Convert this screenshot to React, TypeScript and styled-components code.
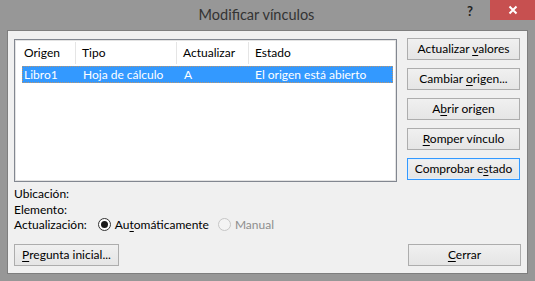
import React from 'react';
import styled, { createGlobalStyle } from 'styled-components';

const GlobalStyle = createGlobalStyle`
  html, body {
    margin: 0;
    padding: 0;
    background: #979797;
  }
  body {
    font-family: Lato, 'Noto Sans', 'Liberation Sans', sans-serif;
    font-size: 12px;
    color: #000;
  }
`;

const Window = styled.div`
  width: 535px;
  height: 281px;
  box-sizing: border-box;
  background: #979797;
  display: flex;
  flex-direction: column;
  padding: 0 7px 7px 7px;
`;

const TitleBar = styled.div`
  height: 30px;
  display: flex;
  align-items: flex-start;
`;

const Title = styled.div`
  flex: 1;
  text-align: center;
  font-size: 14.5px;
  line-height: 30px;
  color: #333;
  padding-left: 44px;
`;

const HelpButton = styled.div`
  width: 16px;
  height: 20px;
  line-height: 22px;
  text-align: center;
  font-weight: bold;
  font-size: 13px;
  color: #222;
  margin-right: 12px;
`;

const CloseButton = styled.div`
  width: 45px;
  height: 20px;
  background: #c75050;
  display: flex;
  align-items: center;
  justify-content: center;
  margin-right: -7px;
`;

const Client = styled.div`
  flex: 1;
  background: #f0f0f0;
  border: 1px solid #7e7e7e;
  display: flex;
  flex-direction: column;
  padding: 7px 6px 0 6px;
`;

const TopSection = styled.div`
  display: flex;
  gap: 10px;
`;

const ListView = styled.div`
  width: 383px;
  height: 143px;
  box-sizing: border-box;
  margin-top: 1px;
  border: 1px solid #828790;
  box-shadow: inset 0 0 0 1px #e3e3e3;
  background: #fff;
  padding: 2px 2px;
`;

const HeaderRow = styled.div`
  display: grid;
  grid-template-columns: 59px 101px 72px 1fr;
  height: 22px;
  align-items: center;
`;

const HeaderCell = styled.div<{ $first?: boolean }>`
  height: 22px;
  line-height: 22px;
  padding-left: ${p => (p.$first ? '7px' : '6px')};
  border-right: 1px solid #e5e5e5;
  &:last-child {
    border-right: none;
  }
`;

const DataRow = styled.div<{ $selected?: boolean }>`
  display: grid;
  grid-template-columns: 60px 101px 71px 1fr;
  height: 17px;
  line-height: 15px;
  box-sizing: border-box;
  margin: 2px 1px 0 5px;
  background: ${p => (p.$selected ? '#3399ff' : 'transparent')};
  color: ${p => (p.$selected ? '#fff' : '#000')};
  border: 1px dotted ${p => (p.$selected ? '#b99570' : 'transparent')};
`;

const DataCell = styled.div<{ $first?: boolean }>`
  padding-left: ${p => (p.$first ? '1px' : '0')};
  white-space: nowrap;
`;

const ButtonColumn = styled.div`
  display: flex;
  flex-direction: column;
  gap: 8px;
`;

const Button = styled.button<{ $default?: boolean; $width?: number }>`
  width: ${p => p.$width ?? 113}px;
  height: 22px;
  box-sizing: border-box;
  border: 1px solid ${p => (p.$default ? '#3399ff' : '#adadad')};
  box-shadow: ${p => (p.$default ? 'inset 0 0 0 1px #e0eefb' : 'none')};
  background: linear-gradient(#f0f0f0, #e5e5e5);
  font-family: Lato, 'Noto Sans', 'Liberation Sans', sans-serif;
  font-size: 12px;
  color: #000;
  padding: 0;
  line-height: 18px;
  text-align: center;
  cursor: default;
  u {
    text-decoration: underline;
    text-underline-offset: 2px;
  }
`;

const InfoSection = styled.div`
  display: flex;
  flex-direction: column;
  margin-top: 4px;
`;

const InfoLine = styled.div`
  height: 15.5px;
  line-height: 15px;
  display: flex;
  align-items: center;
`;

const UpdateLabel = styled.span`
  margin-right: 11px;
`;

const RadioLabel = styled.label<{ $disabled?: boolean }>`
  display: flex;
  align-items: center;
  gap: 4px;
  color: ${p => (p.$disabled ? '#8d8d8d' : '#000')};
  margin-right: 9px;
  u {
    text-underline-offset: 2px;
  }
`;

const RadioCircle = styled.span<{ $checked?: boolean; $disabled?: boolean }>`
  width: 13px;
  height: 13px;
  box-sizing: border-box;
  border-radius: 50%;
  border: 1px solid ${p => (p.$disabled ? '#c6c6c6' : '#333')};
  background: ${p => (p.$disabled ? '#f4f4f4' : '#fff')};
  display: flex;
  align-items: center;
  justify-content: center;
  &::after {
    content: '';
    display: ${p => (p.$checked ? 'block' : 'none')};
    width: 7px;
    height: 7px;
    border-radius: 50%;
    background: #1a1a1a;
  }
`;

const BottomBar = styled.div`
  display: flex;
  justify-content: space-between;
  margin-top: 11px;
`;

export default function App() {
  return (
    <>
      <GlobalStyle />
      <Window>
        <TitleBar>
          <Title>Modificar vínculos</Title>
          <HelpButton>?</HelpButton>
          <CloseButton>
            <svg width="10" height="10" viewBox="0 0 10 10">
              <path d="M1.5 1.5 L8.5 8.5 M8.5 1.5 L1.5 8.5" stroke="#fff" strokeWidth="2" />
            </svg>
          </CloseButton>
        </TitleBar>
        <Client>
          <TopSection>
            <ListView>
              <HeaderRow>
                <HeaderCell $first>Origen</HeaderCell>
                <HeaderCell>Tipo</HeaderCell>
                <HeaderCell>Actualizar</HeaderCell>
                <HeaderCell>Estado</HeaderCell>
              </HeaderRow>
              <DataRow $selected>
                <DataCell $first>Libro1</DataCell>
                <DataCell>Hoja de cálculo</DataCell>
                <DataCell>A</DataCell>
                <DataCell>El origen está abierto</DataCell>
              </DataRow>
            </ListView>
            <ButtonColumn>
              <Button>Actualizar <u>v</u>alores</Button>
              <Button>Cambiar <u>o</u>rigen...</Button>
              <Button>A<u>b</u>rir origen</Button>
              <Button><u>R</u>omper vínculo</Button>
              <Button $default>Comprobar e<u>s</u>tado</Button>
            </ButtonColumn>
          </TopSection>
          <InfoSection>
            <InfoLine>Ubicación:</InfoLine>
            <InfoLine>Elemento:</InfoLine>
            <InfoLine>
              <UpdateLabel>Actualización:</UpdateLabel>
              <RadioLabel>
                <RadioCircle $checked />
                <span>Au<u>t</u>omáticamente</span>
              </RadioLabel>
              <RadioLabel $disabled>
                <RadioCircle $disabled />
                <span>Manual</span>
              </RadioLabel>
            </InfoLine>
          </InfoSection>
          <BottomBar>
            <Button $width={105}><u>P</u>regunta inicial...</Button>
            <Button>
              <u>C</u>errar
            </Button>
          </BottomBar>
        </Client>
      </Window>
    </>
  );
}
